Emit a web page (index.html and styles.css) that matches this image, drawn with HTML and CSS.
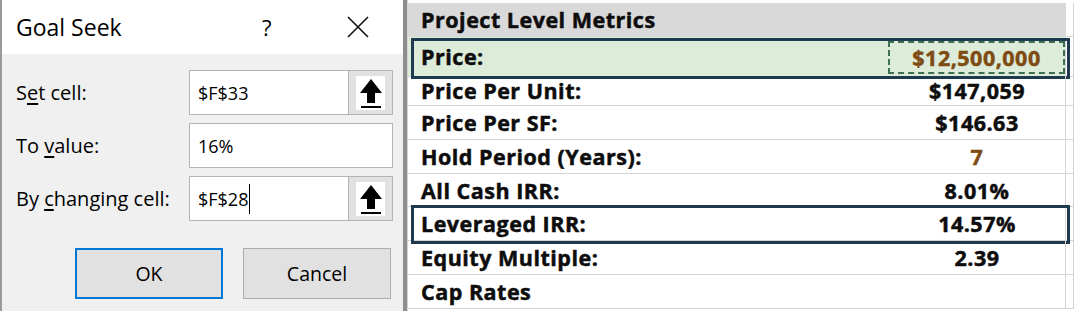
FILE: index.html
```html
<!DOCTYPE html>
<html lang="en">
<head>
  <meta charset="UTF-8">
  <title>Goal Seek</title>
  <link rel="stylesheet" href="styles.css">
</head>
<body>
<div class="screen">

  <!-- Goal Seek dialog -->
  <div class="dialog">
    <div class="titlebar">
      <span class="title">Goal Seek</span>
      <span class="help">?</span>
      <svg class="close" width="22" height="22" viewBox="0 0 22 22">
        <path d="M1 1 L21 21 M21 1 L1 21" stroke="#111" stroke-width="1.6" fill="none"/>
      </svg>
    </div>

    <div class="dialog-body">
      <div class="form">
        <label class="lbl">S<u>e</u>t cell:</label>
        <div class="field">
          <span class="val">$F$33</span>
          <span class="ref-btn">
            <span class="ref-inner">
              <svg width="24" height="30" viewBox="0 0 24 30">
                <path d="M12 1 L23 15 L16 15 L16 25 L8 25 L8 15 L1 15 Z" fill="#000"/>
                <rect x="2" y="28" width="20" height="2" fill="#000"/>
              </svg>
            </span>
          </span>
        </div>

        <label class="lbl">To <u>v</u>alue:</label>
        <div class="field">
          <span class="val">16%</span>
        </div>

        <label class="lbl">By <u>c</u>hanging cell:</label>
        <div class="field">
          <span class="val">$F$28<span class="caret"></span></span>
          <span class="ref-btn">
            <span class="ref-inner">
              <svg width="24" height="30" viewBox="0 0 24 30">
                <path d="M12 1 L23 15 L16 15 L16 25 L8 25 L8 15 L1 15 Z" fill="#000"/>
                <rect x="2" y="28" width="20" height="2" fill="#000"/>
              </svg>
            </span>
          </span>
        </div>
      </div>

      <div class="buttons">
        <button class="btn btn-default">OK</button>
        <button class="btn">Cancel</button>
      </div>
    </div>
  </div>

  <!-- Worksheet -->
  <div class="sheet">
    <div class="row r-head">
      <div class="cell name">Project Level Metrics</div>
      <div class="cell"></div>
      <div class="cell"></div>
    </div>
    <div class="row r-price boxed">
      <div class="cell name">Price:</div>
      <div class="cell value"><div class="marquee input-val">$12,500,000</div></div>
      <div class="cell"></div>
    </div>
    <div class="row r-unit">
      <div class="cell name">Price Per Unit:</div>
      <div class="cell value">$147,059</div>
      <div class="cell"></div>
    </div>
    <div class="row">
      <div class="cell name">Price Per SF:</div>
      <div class="cell value">$146.63</div>
      <div class="cell"></div>
    </div>
    <div class="row">
      <div class="cell name">Hold Period (Years):</div>
      <div class="cell value input-val">7</div>
      <div class="cell"></div>
    </div>
    <div class="row r-cash">
      <div class="cell name">All Cash IRR:</div>
      <div class="cell value">8.01%</div>
      <div class="cell"></div>
    </div>
    <div class="row r-lev boxed">
      <div class="cell name">Leveraged IRR:</div>
      <div class="cell value">14.57%</div>
      <div class="cell"></div>
    </div>
    <div class="row">
      <div class="cell name">Equity Multiple:</div>
      <div class="cell value">2.39</div>
      <div class="cell"></div>
    </div>
    <div class="row">
      <div class="cell name">Cap Rates</div>
      <div class="cell value"></div>
      <div class="cell"></div>
    </div>
  </div>

</div>
</body>
</html>
```

FILE: styles.css
```css
html, body {
  margin: 0;
  padding: 0;
  background: #fff;
}
.screen {
  display: flex;
  width: 1074px;
  height: 311px;
  overflow: hidden;
}

/* dialog */
.dialog {
  width: 407px;
  flex: none;
  box-sizing: border-box;
  border-left: 2px solid #9a9a9a;
  border-right: 4px solid #8e8e8e;
  background: #f0f0f0;
  font-family: "Open Sans", "Noto Sans", sans-serif;
  color: #000;
}
.titlebar {
  height: 54px;
  background: #fff;
  display: flex;
  align-items: center;
  padding-left: 14px;
}
.title {
  font-size: 23px;
  width: 246px;
}
.help {
  font-size: 22px;
  width: 85px;
}
.close {
  display: block;
}
.dialog-body {
  padding: 16px 10px 0 14px;
}
.form {
  display: grid;
  grid-template-columns: 173px 204px;
  row-gap: 8px;
  align-items: center;
}
.lbl {
  font-size: 20px;
}
.lbl u {
  text-underline-offset: 3px;
}
.field {
  height: 45px;
  box-sizing: border-box;
  background: #fff;
  border: 1px solid #b4b4b4;
  display: flex;
  align-items: center;
  font-size: 18px;
}
.val {
  flex: 1;
  padding-left: 8px;
  display: flex;
  align-items: center;
}
.caret {
  display: inline-block;
  width: 1px;
  height: 30px;
  background: #000;
  margin-left: 1px;
}
.ref-btn {
  width: 44px;
  height: 43px;
  box-sizing: border-box;
  background: #e1e1e1;
  border-left: 1px solid #b4b4b4;
  display: flex;
  align-items: center;
  justify-content: center;
}
.ref-inner {
  width: 29px;
  height: 34px;
  background: #fff;
  display: flex;
  align-items: center;
  justify-content: center;
}
.ref-inner svg {
  display: block;
}
.buttons {
  display: flex;
  gap: 20px;
  margin-top: 27px;
  padding-left: 59px;
}
.btn {
  width: 148px;
  height: 51px;
  box-sizing: border-box;
  background: #e1e1e1;
  border: 1px solid #adadad;
  font-family: "Open Sans", "Noto Sans", sans-serif;
  font-size: 19.5px;
  color: #000;
  padding: 0;
}
.btn-default {
  border: 2px solid #0078d7;
}

/* worksheet */
.sheet {
  flex: 1;
  padding-top: 3px;
  border-left: 1px solid #d4d4d4;
  font-family: "Open Sans", "Liberation Sans", sans-serif;
  font-weight: 700;
  font-size: 21.5px;
  letter-spacing: 0.5px;
  -webkit-text-stroke: 0.5px currentColor;
  color: #0d0d0d;
}
.row {
  display: grid;
  grid-template-columns: 481px 177px 1fr;
  height: 34px;
  position: relative;
}
.cell {
  box-sizing: border-box;
  border-bottom: 1px solid #d4d4d4;
  border-right: 1px solid #d4d4d4;
  display: flex;
  align-items: center;
}
.cell.name {
  padding-left: 13px;
  border-right: none;
}
.cell.value {
  justify-content: center;
}
.r-head .cell {
  background: #d9d9d9;
  border-color: #d9d9d9;
}
.r-head .cell:last-child {
  background: #fff;
  border-color: #d4d4d4;
}
.r-price {
  height: 38px;
}
.r-price .cell {
  background: #dcecd9;
}
.r-price .cell:last-child {
  background: #fff;
}
.r-unit {
  height: 31px;
}
.r-cash {
  height: 33px;
}
.input-val {
  color: #7e4b12;
}
.marquee {
  flex: 1;
  align-self: stretch;
  margin: 4px 0 2px -1px;
  border: 2px dashed #3e6f55;
  display: flex;
  align-items: center;
  justify-content: center;
}
.boxed::after {
  content: "";
  position: absolute;
  left: 3px;
  right: 4px;
  border: 3px solid #1e3a4e;
}
.r-price.boxed::after {
  top: 1px;
  bottom: -4px;
}
.r-lev.boxed::after {
  top: -2px;
  bottom: -3px;
}
```
